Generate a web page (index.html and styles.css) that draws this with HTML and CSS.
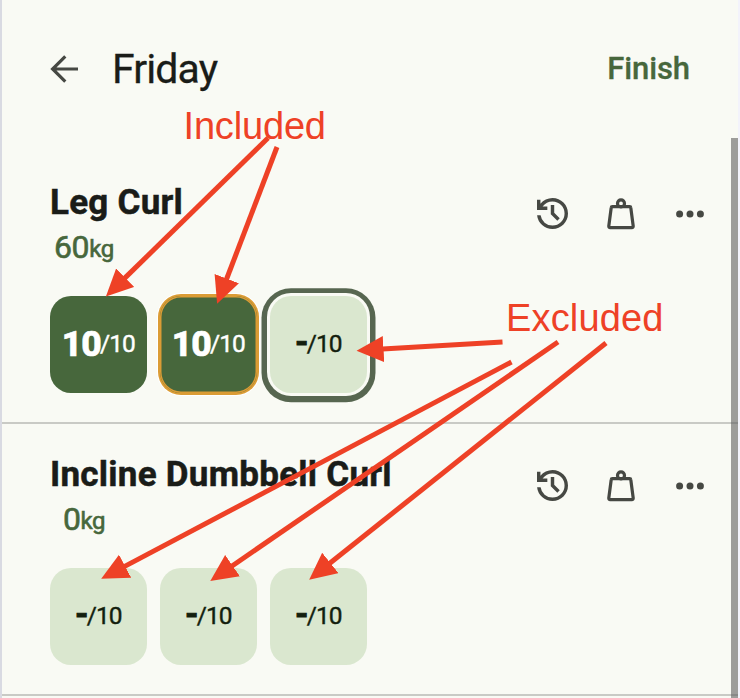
FILE: index.html
```
<!DOCTYPE html>
<html lang="en">
<head>
<meta charset="utf-8">
<title>Friday</title>
<link rel="stylesheet" href="styles.css">
</head>
<body>
<svg class="defs" aria-hidden="true">
  <symbol id="history" viewBox="120 -840 720 720"><path d="M480-120q-138 0-240.5-91.5T122-440h82q14 104 92.5 172T480-200q117 0 198.5-81.5T760-480q0-117-81.5-198.5T480-760q-69 0-129 32t-101 88h110v80H120v-240h80v94q51-64 124.5-99T480-840q75 0 140.5 28.5t114 77q48.5 48.5 77 114T840-480q0 75-28.5 140.5t-77 114q-48.5 48.5-114 77T480-120Zm112-192L440-464v-216h80v184l128 128-56 56Z" fill="currentColor"/></symbol>
  <symbol id="weight" viewBox="0 0 28 32"><g fill="none" stroke="currentColor" stroke-width="3.2" stroke-linejoin="round"><path d="M5.4 8.7H22.6q1.1 0 1.2 1L26.2 28q.1 1.7-1.4 1.7H3.2q-1.5 0-1.4-1.7L4.2 9.7q.1-1 1.2-1Z"/><circle cx="14" cy="5.4" r="3.5"/></g></symbol>
  <symbol id="more" viewBox="0 0 28 8"><g fill="currentColor"><circle cx="3.6" cy="4" r="3.5"/><circle cx="14" cy="4" r="3.5"/><circle cx="24.4" cy="4" r="3.5"/></g></symbol>
</svg>
<main class="screen">
  <header class="topbar">
    <svg class="back" viewBox="0 0 28 28"><path d="M28 14H3M15.3 1.3 2.6 14l12.7 12.7" fill="none" stroke="currentColor" stroke-width="3.2"/></svg>
    <h1 class="title">Friday</h1>
    <span class="finish">Finish</span>
  </header>

  <section class="exercise">
    <div class="head">
      <div class="info">
        <h2 class="name">Leg Curl</h2>
        <div class="load">60<span class="unit">kg</span></div>
      </div>
      <div class="actions">
        <svg class="history"><use href="#history"/></svg>
        <svg class="weight"><use href="#weight"/></svg>
        <svg class="more"><use href="#more"/></svg>
      </div>
    </div>
    <div class="sets">
      <div class="set done"><b>10</b><span>/10</span></div>
      <div class="set done last"><b>10</b><span>/10</span></div>
      <div class="set active"><b class="none">-</b><span>/10</span></div>
    </div>
  </section>

  <section class="exercise">
    <div class="head">
      <div class="info">
        <h2 class="name">Incline Dumbbell Curl</h2>
        <div class="load zero">0<span class="unit">kg</span></div>
      </div>
      <div class="actions">
        <svg class="history"><use href="#history"/></svg>
        <svg class="weight"><use href="#weight"/></svg>
        <svg class="more"><use href="#more"/></svg>
      </div>
    </div>
    <div class="sets">
      <div class="set"><b class="none">-</b><span>/10</span></div>
      <div class="set"><b class="none">-</b><span>/10</span></div>
      <div class="set"><b class="none">-</b><span>/10</span></div>
    </div>
  </section>
</main>
<div class="scrollbar"></div>

<svg class="notes" viewBox="0 0 740 698">
  <defs>
    <marker id="tip" markerUnits="userSpaceOnUse" markerWidth="28" markerHeight="28" refX="1" refY="13" orient="auto"><path d="M0 0 27 13 0 26Z" class="tip"/></marker>
  </defs>
  <g class="arrows">
    <path d="M268 138 124.5 278.4"/>
    <path d="M277 147 226.4 279.5"/>
    <path d="M502.5 342 382.5 349.1"/>
    <path d="M511.5 362 124.2 566.6"/>
    <path d="M558 342 231.7 566.2"/>
    <path d="M606 343 329.5 563.5"/>
  </g>
  <text x="183.5" y="139.2" textLength="142.5">Included</text>
  <text x="506" y="330.6" textLength="157.5">Excluded</text>
</svg>
</body>
</html>
```
FILE: styles.css
```
* { box-sizing: border-box; margin: 0; }

body {
  width: 740px;
  height: 698px;
  overflow: hidden;
  position: relative;
  background: #f9faf4;
  font-family: Roboto, "Liberation Sans", sans-serif;
  color: #1a1c18;
}

.defs { position: absolute; width: 0; height: 0; }

.screen {
  height: 698px;
  border-left: 2px solid #d9dae2;
  border-right: 2px solid #f3f3fb;
  overflow: hidden;
}

.topbar {
  height: 151px;
  padding: 0 48px 14px;
  display: flex;
  align-items: center;
}
.back { width: 28px; height: 28px; color: #464843; }
.title { margin-left: 34px; font-size: 41px; font-weight: 400; line-height: 48px; letter-spacing: -.9px; -webkit-text-stroke: .3px; }
.finish { margin-left: auto; font-size: 31px; font-weight: 500; line-height: 36px; letter-spacing: -.1px; color: #47673c; -webkit-text-stroke: .3px; }

.exercise {
  height: 272px;
  padding: 32px 34px 0 48px;
  box-shadow: 0 1px 0 #c9cac5, inset 0 -1px 0 #c9cac5;
}
.head { display: flex; justify-content: space-between; height: 113px; }
.name { font-size: 35px; font-weight: 700; line-height: 39px; white-space: nowrap; letter-spacing: .25px; -webkit-text-stroke: .5px; }
.load { margin: 6px 0 0 4px; font-size: 32px; line-height: 38px; color: #47673c; -webkit-text-stroke: .6px; letter-spacing: -.4px; }
.zero { margin-left: 13px; }
.unit { position: relative; top: -1px; font-size: 24px; }

.actions { display: flex; align-items: center; height: 61px; color: #464843; }
.history { width: 31px; height: 31px; }
.weight { width: 28px; height: 32px; margin-left: 39px; }
.more { width: 28px; height: 8px; margin-left: 41px; }

.sets { display: flex; gap: 13.5px; }
.set {
  width: 96.5px;
  height: 96.5px;
  border-radius: 21px;
  display: flex;
  align-items: center;
  justify-content: center;
  background: #dae7cf;
  color: #131f0e;
  font-size: 24.5px;
  line-height: 36px;
  letter-spacing: -1px;
}
.set span { margin-left: -.8px; -webkit-text-stroke: .4px; }
.set b { font-size: 35.5px; font-weight: 800; letter-spacing: -.9px; -webkit-text-stroke: .7px; }
.set .none { position: relative; top: -2px; font-size: 32px; -webkit-text-stroke: 1.2px; }
.done { background: #47673c; color: #fff; }
.last { box-shadow: 0 0 0 2px #db9c35, inset 0 0 0 1.5px #db9c35, 0 0 0 3px #fff; }
.active { box-shadow: 0 0 0 3px #f9faf4, 0 .8px 0 8.5px #576650; }

.scrollbar {
  position: absolute;
  top: 138px;
  right: 2px;
  width: 7px;
  height: 560px;
  background: rgba(90, 90, 90, .58);
}

.notes { position: absolute; inset: 0; width: 740px; height: 698px; }
.notes text { font: 38px "Liberation Sans", sans-serif; fill: #ee4126; }
.arrows path { fill: none; stroke: #ee4126; stroke-width: 5; marker-end: url(#tip); }
.notes .tip { fill: #ee4126; stroke: none; marker-end: none; }
```
